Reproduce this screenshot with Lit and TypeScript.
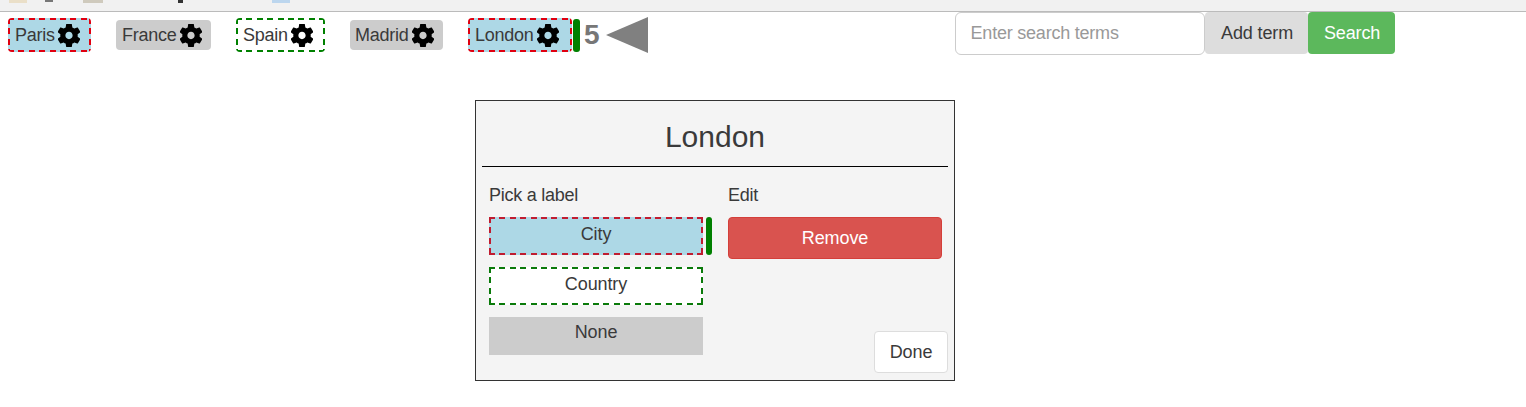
import { LitElement, html, css, svg } from "lit";
import { customElement } from "lit/decorators.js";

const gear = svg`<path fill-rule="evenodd" d="M19.14 12.94c.04-.3.06-.61.06-.94 0-.32-.02-.64-.07-.94l2.03-1.58c.18-.14.23-.41.12-.61l-1.92-3.32c-.12-.22-.37-.29-.59-.22l-2.39.96c-.5-.38-1.03-.7-1.62-.94l-.36-2.54c-.04-.24-.24-.41-.48-.41h-3.84c-.24 0-.43.17-.47.41l-.36 2.54c-.59.24-1.13.57-1.62.94l-2.39-.96c-.22-.08-.47 0-.59.22L2.74 8.87c-.12.21-.08.47.12.61l2.03 1.58c-.05.3-.09.63-.09.94s.02.64.07.94l-2.03 1.58c-.18.14-.23.41-.12.61l1.92 3.32c.12.22.37.29.59.22l2.39-.96c.5.38 1.03.7 1.62.94l.36 2.54c.05.24.24.41.48.41h3.84c.24 0 .44-.17.47-.41l.36-2.54c.59-.24 1.13-.56 1.62-.94l2.39.96c.22.08.47 0 .59-.22l1.92-3.32c.12-.22.07-.47-.12-.61l-2.01-1.58zM12 15c-1.65 0-3-1.35-3-3s1.35-3 3-3 3 1.35 3 3-1.35 3-3 3z"/>`;

const tags = [
  { text: "Paris", kind: "city", width: 83 },
  { text: "France", kind: "none", width: 95 },
  { text: "Spain", kind: "country", width: 89 },
  { text: "Madrid", kind: "none", width: 93 },
  { text: "London", kind: "city", width: 104 },
];

@customElement("app-root")
export class AppRoot extends LitElement {
  static styles = css`
    :host {
      display: block;
      font-family: "Liberation Sans", Arial, sans-serif;
      font-size: 18px;
      color: #3a3a3a;
      height: 407px;
      overflow: hidden;
      background: #fff;
    }
    * { box-sizing: border-box; }
    .strip {
      height: 12px;
      background: #f1f1f1;
      border-bottom: 1px solid #bbb;
      display: flex;
      align-items: flex-start;
    }
    .blip { height: 3px; }
    .b1 { width: 18px; margin-left: 9px; background: #eadfc8; }
    .b2 { width: 8px; margin-left: 18px; background: #777; height: 2px; }
    .b3 { width: 20px; margin-left: 30px; background: #cfcabd; }
    .b4 { width: 5px; margin-left: 75px; background: #333; }
    .b5 { width: 18px; margin-left: 89px; background: #bcd6ee; }
    .top {
      display: flex;
      align-items: flex-start;
      padding-left: 8px;
      height: 88px;
    }
    .tags {
      display: flex;
      align-items: center;
      height: 46px;
    }
    .tag {
      display: flex;
      align-items: center;
      height: 30px;
      padding: 0 6px;
      margin-right: 25px;
      border-radius: 4px;
      white-space: nowrap;
      background-color: #ccc;
      letter-spacing: -0.25px;
    }
    .tag svg { width: 22px; height: 23px; margin-left: 3px; display: block; flex: none; }
    .tag.tight { padding-left: 5px; }
    .dash {
      --c: red;
      background-image:
        repeating-linear-gradient(90deg, var(--c) 0 6px, transparent 6px 10.4px),
        repeating-linear-gradient(90deg, var(--c) 0 6px, transparent 6px 10.4px),
        repeating-linear-gradient(180deg, var(--c) 0 6px, transparent 6px 10.4px),
        repeating-linear-gradient(180deg, var(--c) 0 6px, transparent 6px 10.4px);
      background-size: 100% 2px, 100% 2px, 2px 100%, 2px 100%;
      background-position: 0 0, 0 100%, 0 0, 100% 0;
      background-repeat: no-repeat;
    }
    .tag.city, .tag.country { height: 34px; padding: 0 7px; }
    .tag.city { background-color: lightblue; --c: #e00010; }
    .tag.country { background-color: #fff; --c: green; }
    .tag.last { margin-right: 1px; }
    .marker {
      width: 7px;
      height: 33px;
      background: green;
      border-radius: 3px;
    }
    .count {
      font-size: 28px;
      font-weight: 700;
      color: #777;
      margin-left: 4px;
    }
    .arrow {
      width: 0;
      height: 0;
      margin-left: 6px;
      border-top: 18px solid transparent;
      border-bottom: 18px solid transparent;
      border-right: 42px solid gray;
    }
    .search {
      display: flex;
      align-items: flex-start;
      margin-left: 307px;
    }
    .input {
      width: 250px;
      height: 43px;
      border: 1px solid #ccc;
      border-radius: 6px;
      padding: 0 15px;
      display: flex;
      align-items: center;
      color: #999;
      background: #fff;
      letter-spacing: -0.22px;
    }
    .btn {
      height: 42px;
      display: flex;
      align-items: center;
      justify-content: center;
      border-radius: 4px;
      letter-spacing: -0.12px;
    }
    .add { width: 103px; background: #ddd; padding-left: 2px; }
    .go { width: 87px; background: #5cb85c; color: #fff; padding-left: 2px; }
    .modal {
      width: 480px;
      height: 281px;
      margin-left: 475px;
      background: #f4f4f4;
      border: 1px solid #333;
      padding: 0 6px;
      display: flex;
      flex-direction: column;
    }
    .title {
      font-size: 30px;
      text-align: center;
      line-height: 34px;
      padding-top: 19px;
      height: 66px;
      border-bottom: 1px solid #000;
      flex: none;
    }
    .body {
      flex: 1;
      display: flex;
      padding: 18px 0 7px 7px;
    }
    .col { display: flex; flex-direction: column; }
    .left { width: 239px; }
    .right { flex: 1; }
    .head { height: 32px; line-height: 20px; letter-spacing: -0.25px; }
    .row { display: flex; margin-bottom: 12px; }
    .pick {
      width: 214px;
      height: 38px;
      line-height: 30px;
      text-align: center;
      background-color: #ccc;
      letter-spacing: -0.1px;
    }
    .pick.city { background-color: lightblue; --c: #c01c30; line-height: 34px; }
    .pick.country { background-color: #fff; --c: #0a7a0a; line-height: 34px; }
    .bar {
      width: 6px;
      height: 38px;
      margin-left: 3px;
      background: green;
      border-radius: 3px;
    }
    .remove {
      width: 214px;
      background: #d9534f;
      border: 1px solid #d43f3a;
      color: #fff;
    }
    .done {
      width: 74px;
      background: #fff;
      border: 1px solid #ddd;
      margin-top: auto;
      align-self: flex-end;
    }
  `;

  render() {
    return html`
      <div class="strip">
        <span class="blip b1"></span><span class="blip b2"></span><span class="blip b3"></span
        ><span class="blip b4"></span><span class="blip b5"></span>
      </div>
      <div class="top">
        <div class="tags">
          ${tags.map(
            (t, i) => html`<div
              class="tag ${t.kind} ${t.kind === "none" ? "" : "dash"} ${t.text === "Madrid" ? "tight" : ""} ${i === tags.length - 1 ? "last" : ""}"
              style="width:${t.width}px"
            >
              ${t.text}<svg viewBox="3 2.5 18 19" fill="#000">${gear}</svg>
            </div>`
          )}
          <div class="marker"></div>
          <div class="count">5</div>
          <div class="arrow"></div>
        </div>
        <div class="search">
          <div class="input">Enter search terms</div>
          <div class="btn add">Add term</div>
          <div class="btn go">Search</div>
        </div>
      </div>
      <div class="modal">
        <div class="title">London</div>
        <div class="body">
          <div class="col left">
            <div class="head">Pick a label</div>
            <div class="row"><div class="pick city dash">City</div><div class="bar"></div></div>
            <div class="row"><div class="pick country dash">Country</div></div>
            <div class="row"><div class="pick none">None</div></div>
          </div>
          <div class="col right">
            <div class="head">Edit</div>
            <div class="btn remove">Remove</div>
            <div class="btn done">Done</div>
          </div>
        </div>
      </div>
    `;
  }
}
